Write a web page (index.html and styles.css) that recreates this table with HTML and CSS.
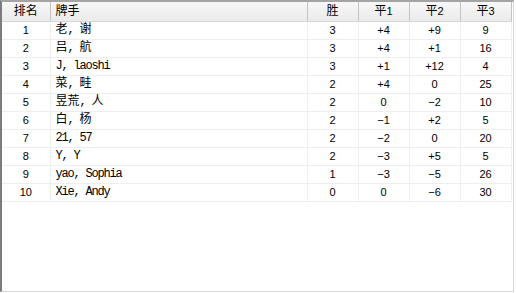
FILE: index.html
```html
<!DOCTYPE html>
<html>
<head>
<meta charset="utf-8">
<link rel="stylesheet" href="styles.css">
</head>
<body>
<div class="frame">
  <table class="grid">
    <colgroup>
      <col class="c-rank"><col class="c-name"><col class="c-num"><col class="c-num"><col class="c-num"><col class="c-num">
    </colgroup>
    <thead>
      <tr>
        <th class="ctr"><span class="c">排名</span></th>
        <th class="left"><span class="c">牌手</span></th>
        <th class="ctr"><span class="c">胜</span></th>
        <th class="ctr"><span class="c">平</span>1</th>
        <th class="ctr"><span class="c">平</span>2</th>
        <th class="ctr"><span class="c">平</span>3</th>
      </tr>
    </thead>
    <tbody>
      <tr><td class="ctr">1</td><td class="left"><span class="c">老</span>, <span class="c">谢</span></td><td class="ctr">3</td><td class="ctr">+4</td><td class="ctr">+9</td><td class="ctr">9</td></tr>
      <tr><td class="ctr">2</td><td class="left"><span class="c">吕</span>, <span class="c">航</span></td><td class="ctr">3</td><td class="ctr">+4</td><td class="ctr">+1</td><td class="ctr">16</td></tr>
      <tr><td class="ctr">3</td><td class="left">J, laoshi</td><td class="ctr">3</td><td class="ctr">+1</td><td class="ctr">+12</td><td class="ctr">4</td></tr>
      <tr><td class="ctr">4</td><td class="left"><span class="c">菜</span>, <span class="c">畦</span></td><td class="ctr">2</td><td class="ctr">+4</td><td class="ctr">0</td><td class="ctr">25</td></tr>
      <tr><td class="ctr">5</td><td class="left"><span class="c">昱荒</span>, <span class="c">人</span></td><td class="ctr">2</td><td class="ctr">0</td><td class="ctr">−2</td><td class="ctr">10</td></tr>
      <tr><td class="ctr">6</td><td class="left"><span class="c">白</span>, <span class="c">杨</span></td><td class="ctr">2</td><td class="ctr">−1</td><td class="ctr">+2</td><td class="ctr">5</td></tr>
      <tr><td class="ctr">7</td><td class="left">21, 57</td><td class="ctr">2</td><td class="ctr">−2</td><td class="ctr">0</td><td class="ctr">20</td></tr>
      <tr><td class="ctr">8</td><td class="left">Y, Y</td><td class="ctr">2</td><td class="ctr">−3</td><td class="ctr">+5</td><td class="ctr">5</td></tr>
      <tr><td class="ctr">9</td><td class="left">yao, Sophia</td><td class="ctr">1</td><td class="ctr">−3</td><td class="ctr">−5</td><td class="ctr">26</td></tr>
      <tr><td class="ctr">10</td><td class="left">Xie, Andy</td><td class="ctr">0</td><td class="ctr">0</td><td class="ctr">−6</td><td class="ctr">30</td></tr>
    </tbody>
  </table>
</div>
</body>
</html>
```
FILE: styles.css
```css
html, body {
  margin: 0;
  padding: 0;
  background: #ffffff;
}

.frame {
  box-sizing: border-box;
  width: 514px;
  height: 292px;
  border-left: 2px solid #7c7c7c;
  border-top: 2px solid #a4a4a4;
  border-right: 1px solid #d8d8d8;
  border-bottom: 1px solid #d8d8d8;
  background: #ffffff;
  overflow: hidden;
}

.grid {
  border-collapse: collapse;
  table-layout: fixed;
  width: 509px;
  font-family: "Liberation Sans", "Noto Sans CJK SC", sans-serif;
  font-size: 11px;
  color: #000000;
}

.c-rank { width: 48px; }
.c-name { width: 257px; }
.c-num { width: 51px; }

.c {
  font-family: "Noto Sans CJK SC", sans-serif;
  font-size: 12px;
  line-height: 12px;
  letter-spacing: 0;
}

.grid th {
  height: 19px;
  padding: 0;
  font-weight: normal;
  line-height: 19px;
  background: linear-gradient(#f7f7f7, #ebebeb);
  border-bottom: 1px solid #d6d6d6;
  border-right: 1px solid #c4c4c4;
  white-space: nowrap;
}

.grid td {
  height: 17px;
  padding: 0;
  line-height: 17px;
  border-bottom: 1px solid #eeeeee;
  border-right: 1px solid #f0f0f0;
  white-space: nowrap;
}

.grid td.left {
  font-family: "Liberation Mono", "Noto Sans CJK SC", monospace;
  font-size: 12px;
  letter-spacing: -1.2px;
}

.ctr { text-align: center; }
.left { text-align: left; padding-left: 5px !important; }
```
